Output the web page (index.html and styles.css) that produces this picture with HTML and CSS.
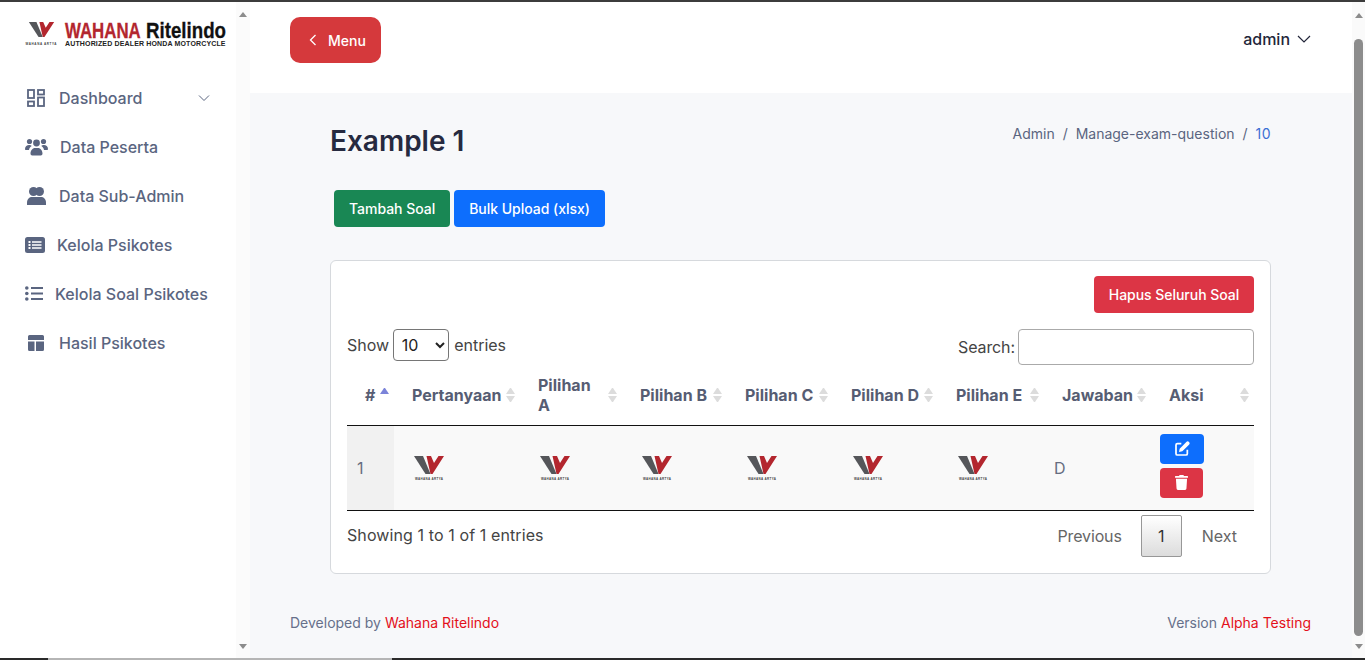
FILE: index.html
```html
<!DOCTYPE html>
<html lang="en">

<head>
  <meta charset="UTF-8">
  <meta name="viewport" content="width=device-width, initial-scale=1.0">
  <title>Example 1</title>
  <link rel="stylesheet" href="styles.css">
</head>

<body>
  <svg class="defs" width="0" height="0" aria-hidden="true">
    <symbol id="wing" viewBox="0 0 32 20">
      <polygon points="1,1 10,1 17.500,19 12.500,19" fill="#55565a" />
      <polygon points="13.500,1 18,1 21,8 25.500,1 31,1 19.500,19 17.500,19" fill="#b3262e" />
    </symbol>
  </svg>

  <div class="topline"></div>

  <div class="page">
    <aside class="sidebar">
      <div class="side-inner">
        <div class="brand">
          <svg class="brand-mark" viewBox="0 0 32 26" width="32" height="26">
            <use href="#wing" x="3" y="0" width="27" height="17" />
            <text x="16" y="23.500" text-anchor="middle" textLength="31" class="mark-text">WAHANA ARTYA</text>
          </svg>
          <div class="brand-text">
            <div class="brand-name">
              <span class="brand-red">WAHANA</span>
              <span class="brand-black">Ritelindo</span>
            </div>
            <div class="brand-sub">AUTHORIZED DEALER HONDA MOTORCYCLE</div>
          </div>
        </div>
        <nav class="nav">
          <a class="nav-item">
            <svg class="ic-dash" viewBox="0 0 18 18" width="18" height="18" fill="none" stroke="#5a6580" stroke-width="1.8">
              <rect x="1" y="1" width="6" height="8" />
              <rect x="11" y="1" width="6" height="4.5" />
              <rect x="1" y="12.5" width="6" height="4.5" />
              <rect x="11" y="8.5" width="6" height="8.5" />
            </svg>
            <span>Dashboard</span>
            <svg class="nav-caret" viewBox="0 0 12 8" width="12" height="8" fill="none" stroke="#5a6580" stroke-width="1"><path d="M1 1.500l5 5 5-5" /></svg>
          </a>
          <a class="nav-item">
            <svg class="ic-users" viewBox="0 0 23 18" width="23" height="18" fill="#5a6580">
              <circle cx="4.500" cy="3.500" r="2.600" /><circle cx="18.500" cy="3.500" r="2.600" /><circle cx="11.500" cy="5" r="3.400" />
              <path d="M0 11c0-2.500 2-4 4-4 1.300 0 2 .4 2.700 1-1.500 1-2.500 2.300-2.700 4H1c-.6 0-1-.4-1-1zM23 11c0-2.500-2-4-4-4-1.300 0-2 .4-2.700 1 1.500 1 2.500 2.300 2.700 4h3c.6 0 1-.4 1-1zM5.500 15.500c0-3 2-5.500 4.500-5.500h3c2.500 0 4.500 2.500 4.500 5.500 0 1.200-.7 2-1.700 2H7.200c-1 0-1.700-.8-1.700-2z" />
            </svg>
            <span>Data Peserta</span>
          </a>
          <a class="nav-item">
            <svg class="ic-person" viewBox="0 0 19 18" width="19" height="18" fill="#5a6580">
              <circle cx="6.500" cy="4.500" r="4.500" /><circle cx="12.500" cy="4.500" r="4.500" />
              <path d="M0 15.500C0 12 2.500 10 5 10h9c2.500 0 5 2 5 5.500V18H0z" />
            </svg>
            <span>Data Sub-Admin</span>
          </a>
          <a class="nav-item">
            <svg class="ic-card" viewBox="0 0 20 16" width="20" height="16">
              <rect width="20" height="16" rx="2.500" fill="#5a6580" />
              <path d="M3.500 4h2v2h-2zM3.500 7h2v2h-2zM3.500 10h2v2h-2zM7 4.300h9.500v1.400H7zM7 7.300h9.500v1.400H7zM7 10.300h9.500v1.400H7z" fill="#fff" />
            </svg>
            <span>Kelola Psikotes</span>
          </a>
          <a class="nav-item">
            <svg class="ic-list" viewBox="0 0 18 15" width="18" height="15" fill="#5a6580">
              <circle cx="1.800" cy="2" r="1.800" /><circle cx="1.800" cy="7.500" r="1.800" /><circle cx="1.800" cy="13" r="1.800" />
              <path d="M6 1h12v2H6zM6 6.500h12v2H6zM6 12h12v2H6z" />
            </svg>
            <span>Kelola Soal Psikotes</span>
          </a>
          <a class="nav-item">
            <svg class="ic-layout" viewBox="0 0 16 16" width="16" height="16" fill="#5a6580">
              <path d="M1.500 0h13A1.500 1.500 0 0 1 16 1.500V5H0V1.500A1.500 1.500 0 0 1 1.500 0zM0 6.500h6.500V16h-5A1.500 1.500 0 0 1 0 14.500zM8 6.500h8v8a1.500 1.500 0 0 1-1.500 1.500H8z" />
            </svg>
            <span>Hasil Psikotes</span>
          </a>
        </nav>
      </div>
      <div class="side-scroll">
        <span class="arrow-up"></span>
        <span class="arrow-down"></span>
      </div>
    </aside>

    <main class="main">
      <header class="topbar">
        <button class="menu-btn">
          <svg viewBox="0 0 8 12" width="8" height="12" fill="none" stroke="#fff" stroke-width="1.300"><path d="M6.500 1L1.500 6l5 5" /></svg>
          Menu
        </button>
        <div class="user">
          admin
          <svg viewBox="0 0 14 8" width="14" height="8" fill="none" stroke="#23263a" stroke-width="1.200"><path d="M1 1l6 6 6-6" /></svg>
        </div>
      </header>

      <section class="content">
        <div class="title-row">
          <h1>Example 1</h1>
          <div class="crumbs">Admin <i>/</i> Manage-exam-question <i>/</i> <b>10</b></div>
        </div>

        <div class="actions">
          <button class="btn btn-green">Tambah Soal</button>
          <button class="btn btn-blue">Bulk Upload (xlsx)</button>
        </div>

        <div class="card">
          <div class="card-top">
            <button class="btn btn-red">Hapus Seluruh Soal</button>
          </div>

          <div class="dt-controls">
            <label class="dt-length">Show
              <select>
                <option>10</option>
              </select>
              entries</label>
            <label class="dt-search">Search: <input type="text"></label>
          </div>

          <table class="dt">
            <colgroup>
              <col class="c-no"><col class="c-q"><col class="c-a"><col class="c-b"><col class="c-c"><col class="c-d"><col class="c-e"><col class="c-ans"><col class="c-act">
            </colgroup>
            <thead>
              <tr>
                <th><div class="th-in"><span>#</span><span class="sort asc"></span></div></th>
                <th><div class="th-in"><span>Pertanyaan</span><span class="sort"></span></div></th>
                <th><div class="th-in"><span>Pilihan<br>A</span><span class="sort"></span></div></th>
                <th><div class="th-in"><span>Pilihan B</span><span class="sort"></span></div></th>
                <th><div class="th-in"><span>Pilihan C</span><span class="sort"></span></div></th>
                <th><div class="th-in"><span>Pilihan D</span><span class="sort"></span></div></th>
                <th><div class="th-in"><span>Pilihan E</span><span class="sort"></span></div></th>
                <th><div class="th-in"><span>Jawaban</span><span class="sort"></span></div></th>
                <th><div class="th-in"><span>Aksi</span><span class="sort"></span></div></th>
              </tr>
            </thead>
            <tbody>
              <tr>
                <td class="td-no">1</td>
                <td><svg class="logo" viewBox="0 0 32 26" width="32" height="26"><use href="#wing" width="32" height="20" /><text x="16" y="24.500" text-anchor="middle" textLength="28" class="mark-text">WAHANA ARTYA</text></svg></td>
                <td><svg class="logo" viewBox="0 0 32 26" width="32" height="26"><use href="#wing" width="32" height="20" /><text x="16" y="24.500" text-anchor="middle" textLength="28" class="mark-text">WAHANA ARTYA</text></svg></td>
                <td><svg class="logo" viewBox="0 0 32 26" width="32" height="26"><use href="#wing" width="32" height="20" /><text x="16" y="24.500" text-anchor="middle" textLength="28" class="mark-text">WAHANA ARTYA</text></svg></td>
                <td><svg class="logo" viewBox="0 0 32 26" width="32" height="26"><use href="#wing" width="32" height="20" /><text x="16" y="24.500" text-anchor="middle" textLength="28" class="mark-text">WAHANA ARTYA</text></svg></td>
                <td><svg class="logo" viewBox="0 0 32 26" width="32" height="26"><use href="#wing" width="32" height="20" /><text x="16" y="24.500" text-anchor="middle" textLength="28" class="mark-text">WAHANA ARTYA</text></svg></td>
                <td><svg class="logo" viewBox="0 0 32 26" width="32" height="26"><use href="#wing" width="32" height="20" /><text x="16" y="24.500" text-anchor="middle" textLength="28" class="mark-text">WAHANA ARTYA</text></svg></td>
                <td>D</td>
                <td class="td-act">
                  <div class="row-actions">
                    <button class="icon-btn btn-blue">
                      <svg viewBox="0 0 24 24" width="16" height="16"><path d="M11 4H5a2 2 0 0 0-2 2v13a2 2 0 0 0 2 2h13a2 2 0 0 0 2-2v-6" fill="none" stroke="#fff" stroke-width="2.600" /><path d="M18.500 1.500a2.300 2.300 0 0 1 4 4L12.500 15.500l-5 1 1-5z" fill="#fff" /></svg>
                    </button>
                    <button class="icon-btn btn-red">
                      <svg viewBox="0 0 448 512" width="13" height="15" fill="#fff"><path d="M432 32H312l-9.400-18.700A24 24 0 0 0 281.100 0H166.800a23.720 23.720 0 0 0-21.400 13.300L136 32H16A16 16 0 0 0 0 48v32a16 16 0 0 0 16 16h416a16 16 0 0 0 16-16V48a16 16 0 0 0-16-16zM53.200 467a48 48 0 0 0 47.900 45h245.800a48 48 0 0 0 47.900-45L416 128H32z" /></svg>
                    </button>
                  </div>
                </td>
              </tr>
            </tbody>
          </table>

          <div class="dt-foot">
            <div class="dt-info">Showing 1 to 1 of 1 entries</div>
            <div class="pager">
              <a class="prev">Previous</a>
              <a class="current">1</a>
              <a class="next">Next</a>
            </div>
          </div>
        </div>
      </section>

      <footer class="foot">
        <div>Developed by <em>Wahana Ritelindo</em></div>
        <div>Version <em>Alpha Testing</em></div>
      </footer>
    </main>

    <div class="page-scroll">
      <span class="arrow-up"></span>
      <span class="thumb"></span>
      <span class="arrow-down"></span>
    </div>
  </div>

  <div class="bottomline">
    <span class="bl-dark bl-a"></span>
    <span class="bl-light"></span>
    <span class="bl-dark bl-b"></span>
  </div>
</body>

</html>
```

FILE: styles.css
```css
* {
  box-sizing: border-box;
}

html,
body {
  margin: 0;
  height: 660px;
  overflow: hidden;
}

body {
  display: flex;
  flex-direction: column;
  font-family: Inter, "Liberation Sans", sans-serif;
  font-size: 16px;
  color: #5a6580;
  background: #fff;
}

.defs {
  position: absolute;
}

.mark-text {
  font-family: "Liberation Sans", sans-serif;
  font-size: 3px;
  font-weight: 700;
  fill: #444;
}

.topline {
  height: 2px;
  flex: none;
  background: #3c3c3c;
}

.bottomline {
  height: 2px;
  flex: none;
  display: flex;
}

.bl-dark {
  background: #2a2a2a;
}

.bl-a {
  width: 48px;
}

.bl-light {
  width: 344px;
  background: #b5b5b5;
}

.bl-b {
  flex: 1;
}

.page {
  flex: 1;
  display: flex;
  min-height: 0;
}

/* sidebar */
.sidebar {
  width: 250px;
  flex: none;
  display: flex;
  background: #fff;
}

.side-inner {
  flex: 1;
  min-width: 0;
}

.side-scroll {
  width: 14px;
  flex: none;
  background: #fbfbfb;
  display: flex;
  flex-direction: column;
  justify-content: space-between;
  align-items: center;
  padding: 10px 0 9px;
}

.arrow-up {
  width: 0;
  height: 0;
  flex: none;
  border-left: 4px solid transparent;
  border-right: 4px solid transparent;
  border-bottom: 5px solid #8c8c8c;
}

.arrow-down {
  width: 0;
  height: 0;
  flex: none;
  border-left: 4px solid transparent;
  border-right: 4px solid transparent;
  border-top: 5px solid #8c8c8c;
}

.brand {
  height: 71px;
  display: flex;
  padding: 19px 0 0 25px;
}

.brand-mark {
  flex: none;
  margin-right: 8px;
}

.brand-text {
  width: 160px;
  flex: none;
}

.brand-name {
  display: flex;
  gap: 6px;
  font-family: "Liberation Sans", sans-serif;
  font-weight: 700;
  font-size: 22px;
  line-height: 20px;
  white-space: nowrap;
  -webkit-text-stroke: .3px;
}

.brand-name span {
  flex: none;
  transform-origin: left;
}

.brand-red {
  width: 75px;
  color: #b3262e;
  transform: scaleX(.765);
}

.brand-black {
  width: 79px;
  color: #111;
  transform: scaleX(.85);
}

.brand-sub {
  font-family: "Liberation Sans", sans-serif;
  font-weight: 700;
  font-size: 7px;
  letter-spacing: .15px;
  line-height: 6px;
  white-space: nowrap;
  color: #222;
}

.nav-item {
  height: 49px;
  display: flex;
  align-items: center;
  font-weight: 500;
}

.nav-caret {
  margin-left: 56px;
}

.ic-dash {
  margin: 0 14px 0 27px;
}

.ic-users {
  margin: 0 12px 0 25px;
}

.ic-person {
  margin: 0 13px 0 27px;
}

.ic-card {
  margin: 0 12px 0 25px;
}

.ic-list {
  margin: 0 12px 0 25px;
}

.ic-layout {
  margin: 0 15px 0 28px;
}

/* main column */
.main {
  flex: 1;
  min-width: 0;
  display: flex;
  flex-direction: column;
  background: #f7f8fa;
}

.topbar {
  height: 91px;
  flex: none;
  background: #fff;
  display: flex;
  justify-content: space-between;
  padding: 15px 41px 0 40px;
}

.menu-btn {
  width: 91px;
  height: 46px;
  border: 0;
  border-radius: 10px;
  background: #d5393c;
  color: #fff;
  font: 500 14px Inter, sans-serif;
  display: flex;
  align-items: center;
  gap: 11px;
  padding: 0 0 0 19px;
}

.user {
  display: flex;
  align-items: center;
  gap: 7px;
  height: 44px;
  font-size: 16px;
  font-weight: 500;
  color: #23263a;
}

.content {
  flex: 1;
  padding: 0 81px 0 80px;
}

.title-row {
  display: flex;
  justify-content: space-between;
  height: 97px;
  padding-top: 29px;
}

h1 {
  margin: 0;
  font-size: 28px;
  font-weight: 600;
  line-height: 38px;
  color: #262a40;
}

.crumbs {
  font-size: 14px;
  line-height: 24px;
}

.crumbs i {
  font-style: normal;
  padding: 0 4px;
}

.crumbs b {
  font-weight: 400;
  letter-spacing: .5px;
  color: #3b6fd4;
}

.actions {
  display: flex;
  gap: 4px;
  padding-left: 4px;
  height: 70px;
}

.btn {
  height: 37px;
  border: 0;
  border-radius: 4px;
  padding: 0 15px;
  font: 500 14px Inter, sans-serif;
  letter-spacing: -.03px;
  color: #fff;
}

.btn-green {
  background: #198754;
}

.btn-blue {
  background: #0d6efd;
}

.btn-red {
  background: #dc3545;
}

.card-top .btn-red {
  width: 160px;
  padding: 0;
}

.card {
  height: 314px;
  background: #fff;
  border: 1px solid #d6d9dd;
  border-radius: 6px;
  padding: 15px 16px 0;
}

.card-top {
  display: flex;
  justify-content: flex-end;
  height: 53px;
}

.dt-controls {
  display: flex;
  justify-content: space-between;
  align-items: flex-start;
  height: 36px;
  color: #444;
}

.dt-length select {
  width: 56px;
  height: 32px;
  margin: 0 1px 0 -1px;
  padding-left: 4px;
  font: 16px Inter, sans-serif;
  color: #222;
  background: #fff;
  border: 1px solid #767676;
  border-radius: 4px;
}

.dt-search {
  display: flex;
  align-items: center;
  letter-spacing: -.1px;
}

.dt-search input {
  width: 236px;
  height: 36px;
  margin-left: 3px;
  border: 1px solid #aaa;
  border-radius: 4px;
}

.dt {
  width: 907px;
  table-layout: fixed;
  border-collapse: collapse;
  color: #666d80;
}

.c-no {
  width: 47px;
}

.c-q {
  width: 126px;
}

.c-a {
  width: 102px;
}

.c-b {
  width: 105px;
}

.c-c {
  width: 106px;
}

.c-d {
  width: 105px;
}

.c-e {
  width: 106px;
}

.c-ans {
  width: 107px;
}

.c-act {
  width: 103px;
}

.dt th {
  height: 60px;
  padding: 0 5px 0 18px;
  border-bottom: 1px solid #111;
  font-weight: 700;
  text-align: left;
  line-height: 20px;
  color: #565d73;
}

.th-in {
  display: flex;
  align-items: center;
  justify-content: space-between;
}

.sort {
  flex: none;
  width: 9px;
  height: 14px;
  display: flex;
  flex-direction: column;
  justify-content: space-between;
}

.sort::before {
  content: "";
  border-left: 4.500px solid transparent;
  border-right: 4.500px solid transparent;
  border-bottom: 6px solid #dcdcdc;
}

.sort::after {
  content: "";
  border-left: 4.500px solid transparent;
  border-right: 4.500px solid transparent;
  border-top: 6px solid #dcdcdc;
}

.sort.asc::before {
  border-bottom-color: #7b84d9;
}

.sort.asc::after {
  border-top-color: transparent;
}

.dt td {
  height: 85px;
  padding: 0 10px;
  background: #f9f9f9;
  border-bottom: 1px solid #111;
}

.dt td.td-no {
  background: #f1f1f1;
}

.logo {
  display: block;
  margin-left: 9px;
}

.dt td.td-act {
  padding-left: 9px;
}

.row-actions {
  display: flex;
  flex-direction: column;
  gap: 4px;
  align-items: flex-start;
  margin-bottom: 4px;
}

.icon-btn {
  width: 44px;
  height: 30px;
  border: 0;
  border-radius: 4px;
  display: flex;
  align-items: center;
  justify-content: center;
  padding: 0;
}

.icon-btn.btn-red {
  width: 43px;
}

.dt-foot {
  display: flex;
  justify-content: space-between;
  align-items: flex-start;
  padding-top: 4px;
  color: #444;
}

.dt-info {
  line-height: 40px;
  letter-spacing: .1px;
}

.pager {
  display: flex;
  align-items: center;
  color: #666;
}

.pager a {
  line-height: 42px;
}

.pager .prev {
  padding-right: 19px;
  letter-spacing: -.15px;
}

.pager .next {
  padding: 0 17px 0 20px;
}

.pager .current {
  width: 41px;
  height: 42px;
  text-align: center;
  color: #333;
  border: 1px solid #979797;
  border-radius: 2px;
  background: linear-gradient(#fff, #dcdcdc);
  line-height: 40px;
}

.foot {
  height: 72px;
  flex: none;
  display: flex;
  justify-content: space-between;
  padding: 28px 41px 0 40px;
  font-size: 14px;
  color: #66708a;
}

.foot em {
  font-style: normal;
  color: #e3101a;
}

/* page scrollbar */
.page-scroll {
  width: 13px;
  flex: none;
  background: #fafafa;
  display: flex;
  flex-direction: column;
  align-items: center;
  padding: 11px 0 9px;
}

.thumb {
  width: 9px;
  flex: 1;
  margin: 21px 0 8px;
  background: #8c8c8c;
  border-radius: 5px;
}
```
